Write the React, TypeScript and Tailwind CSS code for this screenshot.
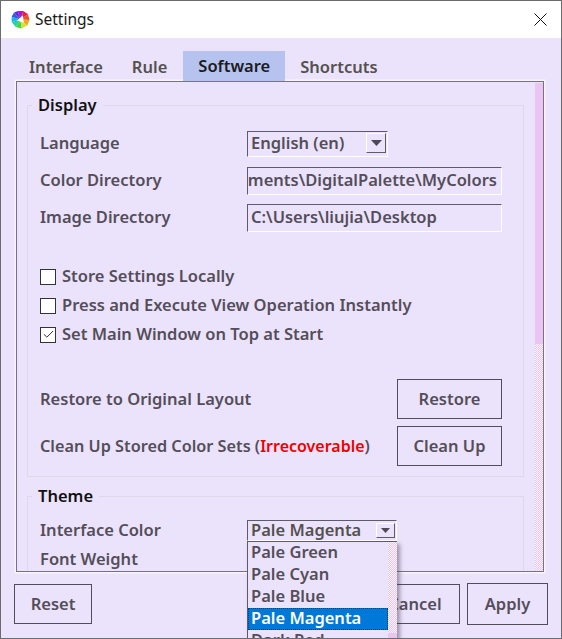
import { Check } from "lucide-react";

const labelText = "text-[16.5px] font-semibold text-[#544e5a] leading-none";
const rowLabel = "flex items-center " + labelText;
const flatButton =
  "flex items-center justify-center border border-[#524c5c] text-[16.5px] font-semibold text-[#544e5a]";
const sunken =
  "border border-t-[#5f5a68] border-l-[#5f5a68] border-r-white border-b-white";
const ditherBar =
  "bg-[repeating-conic-gradient(#e9c6f1_0_25%,#f8f3fc_0_50%)] bg-[length:2px_2px]";

const AppLogo = () => (
  <svg width="19" height="19" viewBox="0 0 20 20" className="shrink-0">
    <path d="M10 10 L7 1 L13 1 Z" fill="#a21cd0" />
    <path d="M10 10 L13 1 L18 4.5 Z" fill="#e8203c" />
    <path d="M10 10 L18 4.5 L19.5 10.5 Z" fill="#f0502a" />
    <path d="M10 10 L19.5 10.5 L17 16.5 Z" fill="#f5a623" />
    <path d="M10 10 L17 16.5 L11 19.5 Z" fill="#d8e030" />
    <path d="M10 10 L11 19.5 L5 18 Z" fill="#3fd84a" />
    <path d="M10 10 L5 18 L0.7 12.5 Z" fill="#22d4a0" />
    <path d="M10 10 L0.7 12.5 L0.7 7 Z" fill="#18b4ea" />
    <path d="M10 10 L0.7 7 L3 3 Z" fill="#2a5ce0" />
    <path d="M10 10 L3 3 L7 1 Z" fill="#5a2fd8" />
    <path d="M12.5 5.5 L13.5 13.5 L6.5 11 Z" fill="#ffffff" />
  </svg>
);

const CloseIcon = () => (
  <svg width="13" height="13" viewBox="0 0 13 13" className="ml-auto">
    <path d="M0.5 0.5 L12.5 12.5 M12.5 0.5 L0.5 12.5" stroke="#111" strokeWidth="1" fill="none" />
  </svg>
);

const ComboArrow = ({ small }: { small?: boolean }) => (
  <div
    className={
      small
        ? "flex h-[15px] w-[19px] shrink-0 items-center justify-center border border-t-white border-l-white border-r-[#5f5a68] border-b-[#5f5a68]"
        : "flex h-[20px] w-[20px] shrink-0 items-center justify-center border border-t-white border-l-white border-r-[#5f5a68] border-b-[#5f5a68]"
    }
  >
    <svg width={small ? 9 : 11} height={small ? 5 : 6} viewBox="0 0 11 6">
      <path d="M0 0 H11 L5.5 6 Z" fill="#4f4956" />
    </svg>
  </div>
);

const Checkbox = ({ label, checked }: { label: string; checked?: boolean }) => (
  <div className="flex h-[29px] items-center gap-[6px]">
    <div className="flex h-[16px] w-[16px] items-center justify-center border border-[#333] bg-white">
      {checked && <Check size={13} strokeWidth={1.6} className="text-[#111]" />}
    </div>
    <span className={labelText}>{label}</span>
  </div>
);

const GroupTitle = ({ title }: { title: string }) => (
  <div className="absolute -top-[12px] left-[4px] bg-[#ebe3fb] px-[6px] text-[16.5px] font-semibold leading-[22px] text-[#111]">
    {title}
  </div>
);

const PopupItem = ({ label, active }: { label: string; active?: boolean }) => (
  <div
    className={
      active
        ? "flex h-[22px] items-center border border-dotted border-[#0b3f70] bg-[#0078d7] pb-[2px] pl-[2px] text-[16.5px] font-semibold text-white"
        : "flex h-[22px] items-center pb-[2px] pl-[3px] text-[16.5px] font-semibold text-[#544e5a]"
    }
  >
    {label}
  </div>
);

export default function App() {
  return (
    <div className="relative h-[639px] w-[562px] overflow-hidden border border-[#6c6c6c] bg-[#ebe3fb] font-['Noto_Sans',sans-serif]">
      {/* title bar */}
      <div className="flex h-[37px] items-center bg-white pl-[10px] pr-[14px]">
        <AppLogo />
        <span className="ml-[5px] text-[15.5px] text-[#1a1a1a]">Settings</span>
        <CloseIcon />
      </div>

      {/* tabs */}
      <div className="mt-[13px] flex h-[30px] pl-[13px] text-[16.5px] font-semibold text-[#54514f]">
        <div className="flex items-center pl-[15px] pr-[14px] pt-[2px]">Interface</div>
        <div className="flex items-center pl-[15px] pr-[16px] pt-[2px]">Rule</div>
        <div className="flex items-center bg-[#b6c3ee] px-[15px] text-[#1c1b22]">Software</div>
        <div className="flex items-center px-[15px] pt-[2px]">Shortcuts</div>
      </div>

      {/* tab pane */}
      <div className="ml-[15px] flex h-[491px] w-[528px] overflow-hidden border border-[#77727f] shadow-[0_0_0_1.5px_#f7f4fc]">
        <div className="w-[518px] shrink-0 pl-[10px] pt-[23px]">
          <div className="relative h-[372px] w-[497px] border border-[#ded8e8] pl-[12px] pr-[21px] pt-[19px]">
            <GroupTitle title="Display" />
            <div className={rowLabel + " h-[37px] justify-between"}>
              <span>Language</span>
              <div className="w-[255px]">
                <div className={sunken + " flex h-[26px] w-[141px] items-center justify-between pb-[1px] pl-[3px] pr-[1px]"}>
                  <span>English (en)</span>
                  <ComboArrow />
                </div>
              </div>
            </div>
            <div className={rowLabel + " h-[37px] justify-between"}>
              <span>Color Directory</span>
              <div className={sunken + " flex h-[28px] w-[255px] items-center justify-end overflow-hidden whitespace-nowrap pb-[1px] pr-[4px]"}>
                ments\DigitalPalette\MyColors
              </div>
            </div>
            <div className={rowLabel + " h-[37px] justify-between"}>
              <span>Image Directory</span>
              <div className={sunken + " flex h-[28px] w-[255px] items-center pb-[1px] pl-[3px]"}>
                C:\Users\liujia\Desktop
              </div>
            </div>

            <div className="mt-[26px]">
              <Checkbox label="Store Settings Locally" />
              <Checkbox label="Press and Execute View Operation Instantly" />
              <Checkbox label="Set Main Window on Top at Start" checked />
            </div>

            <div className="mt-[30px] flex flex-col gap-[7px]">
              <div className={rowLabel + " justify-between"}>
                <span>Restore to Original Layout</span>
                <div className={flatButton + " h-[40px] w-[105px]"}>Restore</div>
              </div>
              <div className={rowLabel + " justify-between"}>
                <span className="text-[16.25px]">
                  Clean Up Stored Color Sets (<span className="text-[16px] text-[#f00000]">Irrecoverable</span>)
                </span>
                <div className={flatButton + " h-[40px] w-[105px]"}>Clean Up</div>
              </div>
            </div>
          </div>

          <div className="relative mt-[19px] h-[120px] w-[497px] border border-[#ded8e8] pl-[12px] pr-[11px] pt-[19px]">
            <GroupTitle title="Theme" />
            <div className={rowLabel + " h-[29px]"}>Interface Color</div>
            <div className={rowLabel + " h-[29px]"}>Font Weight</div>
          </div>
        </div>

        {/* scroll bar */}
        <div className={ditherBar + " mt-px h-full w-[8px] shrink-0"}>
          <div className="h-[261px] bg-[#e9c6f1]" />
        </div>
      </div>

      {/* bottom buttons */}
      <div className="mt-[11px] flex items-center pl-[13px]">
        <div className={flatButton + " h-[40px] w-[78px]"}>Reset</div>
        <div className={flatButton + " ml-[278px] h-[40px] w-[90px]"}>Cancel</div>
        <div className={flatButton + " ml-[7px] h-[42px] w-[81px]"}>Apply</div>
      </div>

      {/* open combo box with its list, above everything */}
      <div className={sunken + " absolute left-[246px] top-[519px] flex h-[21px] w-[150px] items-center justify-between overflow-hidden bg-[#ebe3fb] pb-[1px] pl-[3px] pr-[1px] text-[16.5px] font-semibold leading-[20px] text-[#54514f]"}>
        <span>Pale Magenta</span>
        <ComboArrow small />
      </div>
      <div className="absolute left-[246px] top-[540px] flex h-[110px] w-[150px] overflow-hidden border-l border-t border-l-[#5f5a68] border-t-[#5f5a68] bg-[#ebe3fb] shadow-[3px_3px_4px_rgba(60,50,80,0.45)]">
        <div className="w-[140px] shrink-0">
          <PopupItem label="Pale Green" />
          <PopupItem label="Pale Cyan" />
          <PopupItem label="Pale Blue" />
          <PopupItem label="Pale Magenta" active />
          <PopupItem label="Dark Red" />
        </div>
        <div className={ditherBar + " h-full w-[9px] shrink-0"}>
          <div className="h-[91px]" />
          <div className="h-[19px] bg-[#e9c6f1]" />
        </div>
      </div>
    </div>
  );
}
